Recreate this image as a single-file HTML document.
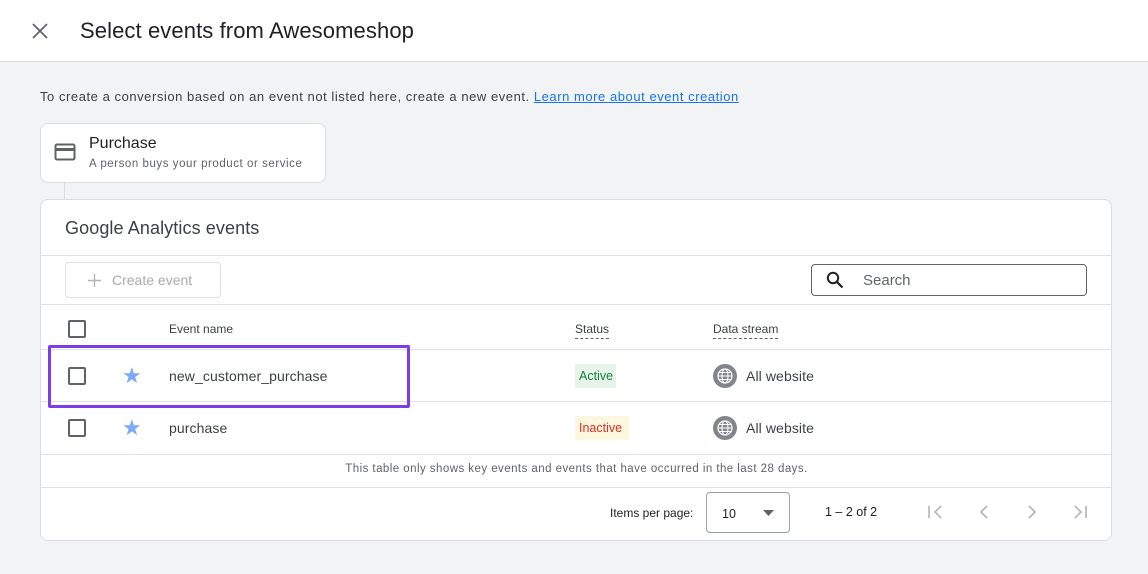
<!DOCTYPE html>
<html><head><style>
*{box-sizing:border-box;margin:0;padding:0}
body{width:1148px;height:574px;background:#f1f3f4;font-family:"Liberation Sans",Arial,sans-serif;color:#202124;position:relative;overflow:hidden}
.abs{position:absolute}
.hdr{left:0;top:0;width:1148px;height:62px;background:#fff;border-bottom:1px solid #dadce0}
.cb{width:18px;height:18px;border:2px solid #5f6368;border-radius:2px}
.hl{height:1px;background:#e0e0e0;left:0;width:1071px}
.th{font-size:12px;color:#3c4043}
.dash{border-bottom:1px dashed #5f6368;padding-bottom:2px}
.row{font-size:14px;color:#3c4043;letter-spacing:.1px}
</style></head><body>
<div class="abs hdr">
 <svg class="abs" style="left:31px;top:22px" width="18" height="18" viewBox="0 0 18 18"><path d="M2 2L16 16M16 2L2 16" stroke="#5f6368" stroke-width="1.8"/></svg>
 <div class="abs" style="left:80px;top:18px;font-size:22px;color:#202124;letter-spacing:.1px">Select events from Awesomeshop</div>
</div>
<div class="abs" style="left:40px;top:89px;font-size:13px;color:#3c4043;letter-spacing:.55px;white-space:nowrap">To create a conversion based on an event not listed here, create a new event. <span style="color:#1a73e8;text-decoration:underline">Learn more about event creation</span></div>
<div class="abs" style="left:40px;top:123px;width:286px;height:60px;background:#fff;border:1px solid #dadce0;border-radius:8px">
 <svg class="abs" style="left:13px;top:19px" width="22" height="18" viewBox="0 0 22 18"><rect x="1.5" y="1.5" width="19" height="15" rx="1.5" fill="none" stroke="#5f6368" stroke-width="2"/><rect x="2" y="5" width="18" height="3" fill="#5f6368"/></svg>
 <div class="abs" style="left:48px;top:11px;font-size:16px;color:#202124">Purchase</div>
 <div class="abs" style="left:48px;top:34px;font-size:11.5px;color:#5f6368;letter-spacing:.55px;white-space:nowrap">A person buys your product or service</div>
</div>
<div class="abs" style="left:64px;top:183px;width:1px;height:17px;background:#dadce0"></div>
<div class="abs" style="left:40px;top:199px;width:1072px;height:342px;background:#fff;border:1px solid #dadce0;border-radius:8px">
 <div class="abs" style="left:24px;top:18px;font-size:18px;color:#3c4043;letter-spacing:.1px">Google Analytics events</div>
 <div class="abs hl" style="top:55px"></div>
 <div class="abs" style="left:24px;top:62px;width:156px;height:36px;border:1px solid #e0e0e0;border-radius:4px;font-size:14px;color:#a9abae;padding:9px 0 0 46px">Create event</div>
 <svg class="abs" style="left:47px;top:74px" width="13" height="13" viewBox="0 0 13 13"><path d="M6.5 0V13M0 6.5H13" stroke="#b0b2b5" stroke-width="1.4"/></svg>
 <div class="abs" style="left:770px;top:64px;width:276px;height:32px;border:1px solid #5f6368;border-radius:4px"></div>
 <svg class="abs" style="left:785px;top:71px" width="18" height="18" viewBox="0 0 18 18"><circle cx="7" cy="7" r="5.2" fill="none" stroke="#202124" stroke-width="2"/><path d="M11 11L16.5 16.5" stroke="#202124" stroke-width="2.2"/></svg>
 <div class="abs" style="left:822px;top:72px;font-size:15px;color:#5f6368">Search</div>
 <div class="abs hl" style="top:104px"></div>
 <div class="abs cb" style="left:27px;top:120px"></div>
 <div class="abs th" style="left:128px;top:122px">Event name</div>
 <div class="abs th dash" style="left:534px;top:122px">Status</div>
 <div class="abs th dash" style="left:672px;top:122px">Data stream</div>
 <div class="abs hl" style="top:149px"></div>
 <div class="abs cb" style="left:27px;top:167px"></div>
 <div class="abs" style="left:81px;top:166px;font-size:22px;color:#7baaf7;line-height:20px">★</div>
 <div class="abs row" style="left:128px;top:168px">new_customer_purchase</div>
 <div class="abs" style="left:534px;top:164px;width:41px;height:24px;background:#e6f4ea;color:#188038;font-size:12.5px;padding:5px 0 0 4px">Active</div>
 <div class="abs hl" style="top:201px"></div>
 <div class="abs cb" style="left:27px;top:219px"></div>
 <div class="abs" style="left:81px;top:218px;font-size:22px;color:#7baaf7;line-height:20px">★</div>
 <div class="abs row" style="left:128px;top:220px">purchase</div>
 <div class="abs" style="left:534px;top:216px;width:54px;height:24px;background:#fef7e0;color:#d93025;font-size:12.5px;padding:5px 0 0 4px">Inactive</div>
 <div class="abs hl" style="top:254px"></div>
 <svg class="abs" style="left:672px;top:164px" width="24" height="24" viewBox="0 0 24 24"><circle cx="12" cy="12" r="12" fill="#80868b"/><circle cx="12" cy="12" r="7" fill="none" stroke="#fff" stroke-width="1.2"/><ellipse cx="12" cy="12" rx="3" ry="7" fill="none" stroke="#fff" stroke-width="1.1"/><path d="M5 12H19M6 8.5H18M6 15.5H18" stroke="#fff" stroke-width="1.1"/></svg>
 <div class="abs row" style="left:705px;top:168px">All website</div>
 <svg class="abs" style="left:672px;top:216px" width="24" height="24" viewBox="0 0 24 24"><circle cx="12" cy="12" r="12" fill="#80868b"/><circle cx="12" cy="12" r="7" fill="none" stroke="#fff" stroke-width="1.2"/><ellipse cx="12" cy="12" rx="3" ry="7" fill="none" stroke="#fff" stroke-width="1.1"/><path d="M5 12H19M6 8.5H18M6 15.5H18" stroke="#fff" stroke-width="1.1"/></svg>
 <div class="abs row" style="left:705px;top:220px">All website</div>
 <div class="abs" style="left:0;top:263px;width:1071px;text-align:center;font-size:11.5px;color:#5f6368;letter-spacing:.45px">This table only shows key events and events that have occurred in the last 28 days.</div>
 <div class="abs hl" style="top:287px"></div>
 <div class="abs" style="left:569px;top:306px;font-size:12px;color:#202124">Items per page:</div>
 <div class="abs" style="left:665px;top:292px;width:84px;height:41px;border:1px solid #9aa0a6;border-radius:4px;font-size:12.5px;padding:14px 0 0 15px">10</div>
 <svg class="abs" style="left:722px;top:310px" width="11" height="6" viewBox="0 0 11 6"><path d="M0 0H11L5.5 6Z" fill="#5f6368"/></svg>
 <div class="abs" style="left:784px;top:305px;font-size:12.5px;color:#202124">1 – 2 of 2</div>
 <svg class="abs" style="left:886px;top:304px" width="170" height="16" viewBox="0 0 170 16"><g fill="none" stroke="#b0b3b8" stroke-width="1.6"><path d="M2 2V14M14 2L8 8L14 14"/><path d="M60 2L54 8L60 14"/><path d="M102 2L108 8L102 14"/><path d="M148 2L154 8L148 14M159 2V14"/></g></svg>
</div>
<div class="abs" style="left:48px;top:345px;width:362px;height:63px;border:3px solid #7d3ce8;border-radius:2px"></div>
</body></html>
